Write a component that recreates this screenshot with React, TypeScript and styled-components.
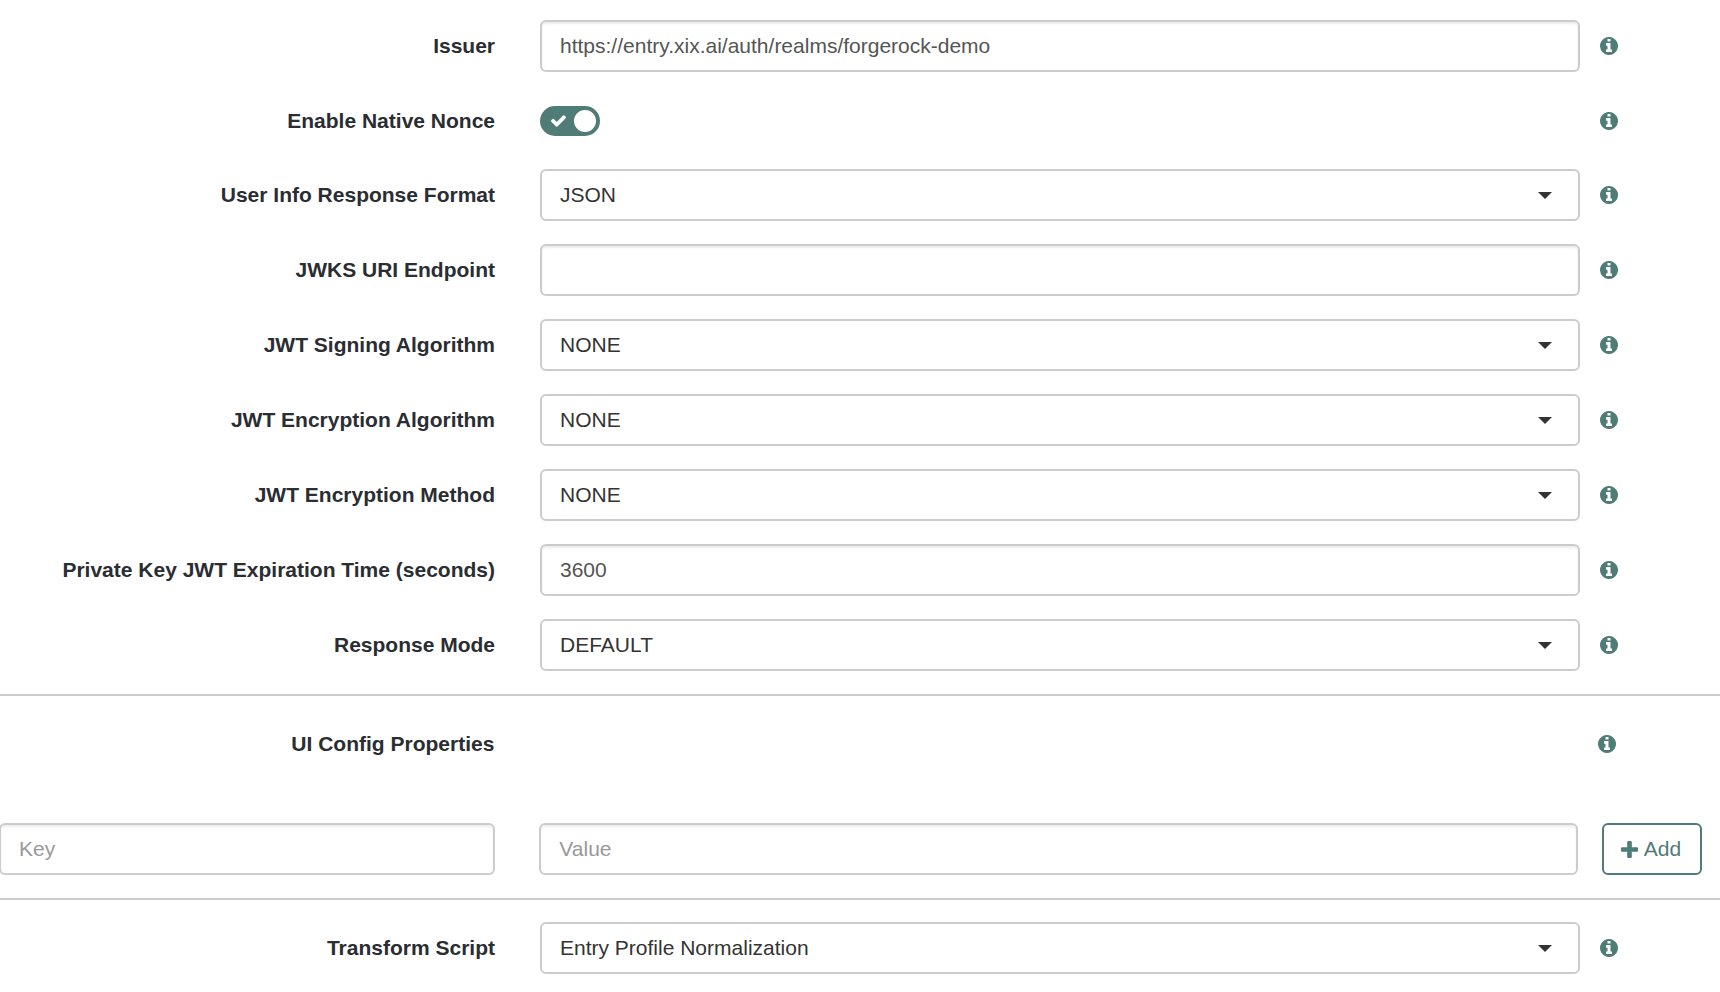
import React, { useId, useState } from 'react';
import styled, { createGlobalStyle } from 'styled-components';

const teal = '#4f7c76';
const line = '#cccccc';

const GlobalStyle = createGlobalStyle`
  *, *::before, *::after { box-sizing: border-box; }
  body {
    margin: 0;
    background: #ffffff;
    color: #2a2d31;
    font-family: 'Liberation Sans', Arial, sans-serif;
    font-size: 21px;
    line-height: 28px;
    overflow-x: hidden;
  }
  button, input, select { font: inherit; }
`;

const Form = styled.form`
  width: 100%;
`;

const Section = styled.section`
  display: flex;
  flex-direction: column;
  gap: 23px;
  padding: 22px 0 23px;

  &:first-child { padding-top: 20px; }
  & + & { border-top: 2px solid ${line}; }
`;

const Row = styled.div<{ $aside?: number }>`
  display: grid;
  grid-template-columns: minmax(0, 124fr) minmax(0, 271fr) ${(p) => p.$aside ?? 140}px;
  align-items: center;
  min-height: 51px;
`;

const HeadingRow = styled(Row)`
  min-height: 52px;
`;

const KeyValueRow = styled(Row)`
  margin-top: 30px;
`;

const LabelCell = styled.div`
  padding-right: 1px;
  text-align: right;
`;

const Label = styled.label`
  font-weight: 700;
`;

const Heading = styled.h2`
  margin: 0;
  font-size: inherit;
  font-weight: 700;
`;

const FieldCell = styled.div`
  display: grid;
  align-items: center;
  margin-left: 44px;
`;

const AsideCell = styled.div<{ $indent?: number }>`
  display: flex;
  align-items: center;
  padding-left: ${(p) => p.$indent ?? 20}px;
`;

const TextInput = styled.input`
  width: 100%;
  height: 52px;
  padding: 0 18px;
  border: 2px solid ${line};
  border-radius: 6px;
  background: #ffffff;
  color: #555555;
  box-shadow: inset 0 2px 2px rgba(0, 0, 0, 0.075);
  outline-color: ${teal};

  &::placeholder { color: #999999; opacity: 1; }
`;

const KeyCell = styled.div`
  display: grid;
  margin-left: -1px;
`;

const SelectBox = styled.select`
  grid-area: 1 / 1;
  width: 100%;
  height: 52px;
  padding: 0 64px 0 18px;
  border: 2px solid ${line};
  border-radius: 6px;
  background: #ffffff;
  color: #333333;
  appearance: none;
  outline-color: ${teal};
`;

const Caret = styled.svg`
  grid-area: 1 / 1;
  justify-self: end;
  width: 14px;
  height: 7px;
  margin-right: 28px;
  fill: #333333;
  pointer-events: none;
`;

const Toggle = styled.label`
  display: flex;
  align-items: center;
  justify-content: space-between;
  width: 60px;
  height: 30px;
  padding: 0 4px 0 11px;
  border-radius: 15px;
  background: #999999;
  cursor: pointer;

  &:has(input:checked) { background: ${teal}; }
  &:has(input:focus-visible) { outline: 2px solid #333333; }
`;

const ToggleInput = styled.input`
  position: absolute;
  opacity: 0;
  width: 1px;
  height: 1px;
  margin: 0;
`;

const ToggleCheck = styled.svg`
  width: 15px;
  height: 12px;
  fill: #ffffff;
`;

const ToggleKnob = styled.span`
  width: 22px;
  height: 22px;
  border-radius: 50%;
  background: #ffffff;
`;

const InfoButton = styled.button`
  display: flex;
  padding: 0;
  border: 0;
  border-radius: 50%;
  background: none;
  color: ${teal};
  cursor: pointer;

  svg { width: 18px; height: 18px; fill: currentColor; }
`;

const AddButton = styled.button`
  display: flex;
  align-items: center;
  justify-content: center;
  gap: 6px;
  width: 100px;
  height: 52px;
  padding: 0 2px 0 0;
  border: 2px solid ${teal};
  border-radius: 6px;
  background: #ffffff;
  color: ${teal};
  cursor: pointer;

  svg { width: 17px; height: 17px; fill: currentColor; }
`;

function Info({ topic }: { topic: string }) {
  return (
    <InfoButton type="button" aria-label={`About ${topic}`}>
      <svg viewBox="128 128 1536 1536" aria-hidden="true">
        <path d="M1152 1376v-160q0-14-9-23t-23-9h-96v-512q0-14-9-23t-23-9h-320q-14 0-23 9t-9 23v160q0 14 9 23t23 9h96v320h-96q-14 0-23 9t-9 23v160q0 14 9 23t23 9h448q14 0 23-9t9-23zm-128-896v-160q0-14-9-23t-23-9h-192q-14 0-23 9t-9 23v160q0 14 9 23t23 9h192q14 0 23-9t9-23zm640 416q0 209-103 385.5t-279.5 279.5-385.5 103-385.5-103-279.5-279.5-103-385.5 103-385.5 279.5-279.5 385.5-103 385.5 103 279.5 279.5 103 385.5z" />
      </svg>
    </InfoButton>
  );
}

type FieldProps = { label: string; value?: string };

function FieldRow({ label, id, children }: { label: string; id: string; children: React.ReactNode }) {
  return (
    <Row>
      <LabelCell>
        <Label htmlFor={id}>{label}</Label>
      </LabelCell>
      <FieldCell>{children}</FieldCell>
      <AsideCell>
        <Info topic={label} />
      </AsideCell>
    </Row>
  );
}

function TextField({ label, value = '' }: FieldProps) {
  const id = useId();
  return (
    <FieldRow label={label} id={id}>
      <TextInput id={id} type="text" defaultValue={value} />
    </FieldRow>
  );
}

function SelectField({ label, value = '' }: FieldProps) {
  const id = useId();
  return (
    <FieldRow label={label} id={id}>
      <SelectBox id={id} defaultValue={value}>
        <option value={value}>{value}</option>
      </SelectBox>
      <Caret viewBox="0 0 14 7" aria-hidden="true">
        <path d="M0 0h14L7 7z" />
      </Caret>
    </FieldRow>
  );
}

function ToggleField({ label }: FieldProps) {
  const id = useId();
  const [on, setOn] = useState(true);
  return (
    <FieldRow label={label} id={id}>
      <Toggle>
        <ToggleInput id={id} type="checkbox" checked={on} onChange={(e) => setOn(e.target.checked)} />
        <ToggleCheck viewBox="121 334 1550 1188" aria-hidden="true">
          <path d="M1671 566q0 40-28 68l-724 724-136 136q-28 28-68 28t-68-28l-136-136-362-362q-28-28-28-68t28-68l136-136q28-28 68-28t68 28l294 295 656-657q28-28 68-28t68 28l136 136q28 28 28 68z" />
        </ToggleCheck>
        <ToggleKnob />
      </Toggle>
    </FieldRow>
  );
}

const keyValueAside = 142;

export default function App() {
  return (
    <>
      <GlobalStyle />
      <Form onSubmit={(e) => e.preventDefault()}>
        <Section>
          <TextField label="Issuer" value="https://entry.xix.ai/auth/realms/forgerock-demo" />
          <ToggleField label="Enable Native Nonce" />
          <SelectField label="User Info Response Format" value="JSON" />
          <TextField label="JWKS URI Endpoint" />
          <SelectField label="JWT Signing Algorithm" value="NONE" />
          <SelectField label="JWT Encryption Algorithm" value="NONE" />
          <SelectField label="JWT Encryption Method" value="NONE" />
          <TextField label="Private Key JWT Expiration Time (seconds)" value="3600" />
          <SelectField label="Response Mode" value="DEFAULT" />
        </Section>
        <Section>
          <HeadingRow $aside={keyValueAside}>
            <LabelCell>
              <Heading>UI Config Properties</Heading>
            </LabelCell>
            <FieldCell />
            <AsideCell>
              <Info topic="UI Config Properties" />
            </AsideCell>
          </HeadingRow>
          <KeyValueRow $aside={keyValueAside}>
            <KeyCell>
              <TextInput type="text" placeholder="Key" aria-label="Key" />
            </KeyCell>
            <FieldCell>
              <TextInput type="text" placeholder="Value" aria-label="Value" />
            </FieldCell>
            <AsideCell $indent={24}>
              <AddButton type="button">
                <svg viewBox="192 128 1408 1408" aria-hidden="true">
                  <path d="M1600 736v192q0 40-28 68t-68 28h-416v416q0 40-28 68t-68 28h-192q-40 0-68-28t-28-68v-416h-416q-40 0-68-28t-28-68v-192q0-40 28-68t68-28h416v-416q0-40 28-68t68-28h192q40 0 68 28t28 68v416h416q40 0 68 28t28 68z" />
                </svg>
                Add
              </AddButton>
            </AsideCell>
          </KeyValueRow>
        </Section>
        <Section>
          <SelectField label="Transform Script" value="Entry Profile Normalization" />
        </Section>
      </Form>
    </>
  );
}
